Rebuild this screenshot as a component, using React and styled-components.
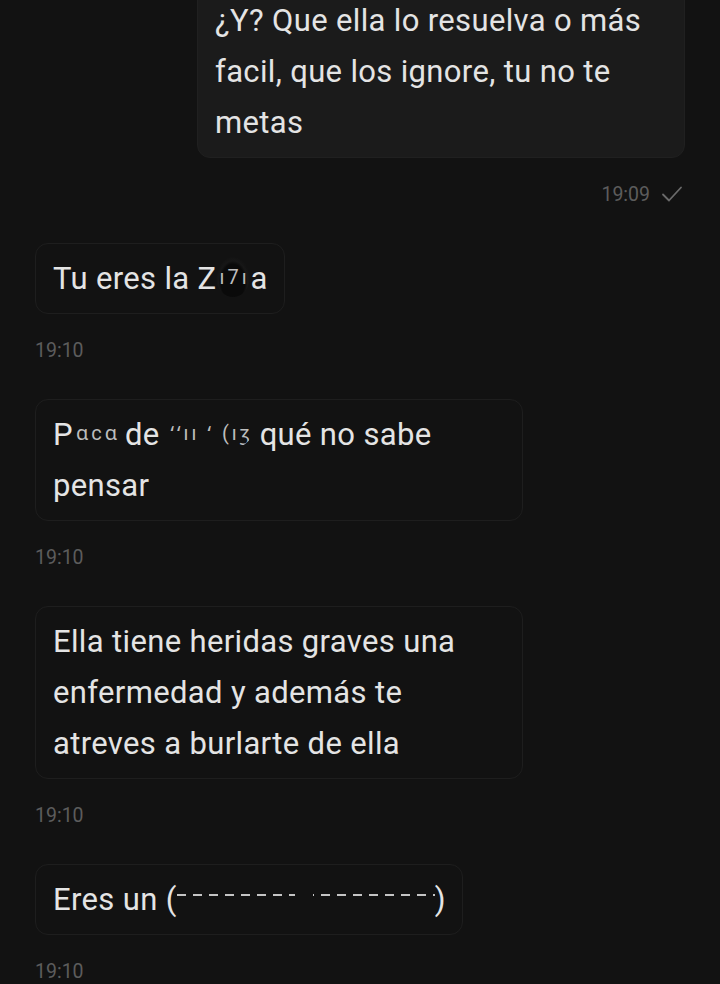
import styled, { createGlobalStyle } from "styled-components";

const GlobalStyle = createGlobalStyle`
  html, body {
    margin: 0;
    padding: 0;
    background: #121212;
  }
  body {
    font-family: Roboto, "Noto Sans", "Liberation Sans", sans-serif;
    overflow: hidden;
  }
`;

const Chat = styled.div`
  display: flex;
  flex-direction: column;
  gap: 37px;
  padding: 0 35px;
  margin-top: -15px;
  height: 1000px;
`;

const Group = styled.div`
  display: flex;
  flex-direction: column;
  align-items: ${(p) => (p.$out ? "flex-end" : "flex-start")};
  gap: 24px;
`;

const Bubble = styled.div`
  box-sizing: border-box;
  max-width: 488px;
  padding: 9px 16px 9px 17px;
  border-radius: 13px;
  background: ${(p) => (p.$out ? "#1b1b1b" : "#121212")};
  border: 1px solid ${(p) => (p.$out ? "#202020" : "#1e1e1e")};
  color: #e4e4e4;
  font-size: 31px;
  letter-spacing: 0.35px;
  line-height: 51px;
`;

const Smudge = styled.span`
  display: inline-block;
  width: ${(p) => p.$w}px;
  height: 40px;
  font-size: 20px;
  line-height: 40px;
  letter-spacing: 3px;
  text-indent: 3px;
  color: #bdbdbd;
  overflow: hidden;
  white-space: nowrap;
  vertical-align: -8px;
  border-radius: 50%;
  background: ${(p) =>
    p.$blob
      ? "radial-gradient(ellipse at 50% 62%, #0a0a0a 0 50%, #171717 60%, transparent 72%)"
      : "transparent"};
`;

const Erased = styled.span`
  display: inline-block;
  width: 258px;
  height: 16px;
  vertical-align: baseline;
  background:
    linear-gradient(90deg, transparent 0 118px, #121212 118px 136px, transparent 136px) top / 100% 2px no-repeat,
    repeating-linear-gradient(90deg, #c4c4c4 0 9px, transparent 9px 16px) top / 100% 2px no-repeat;
`;

const Meta = styled.div`
  display: flex;
  align-items: center;
  gap: 11px;
  height: 24px;
  padding-right: ${(p) => (p.$out ? "2px" : "0")};
`;

const Time = styled.span`
  font-size: 19.5px;
  color: #5c5c5c;
`;

const CheckIcon = () => (
  <svg width="22" height="18" viewBox="0 0 22 18" fill="none">
    <path d="M2 9.5 L8 15.5 L20 2.5" stroke="#6a6a6a" strokeWidth="1.8" strokeLinecap="round" strokeLinejoin="round" />
  </svg>
);

const getMessages = () => [
  {
    id: 1,
    out: true,
    time: "19:09",
    body: "¿Y? Que ella lo resuelva o más facil, que los ignore, tu no te metas",
  },
  {
    id: 2,
    time: "19:10",
    body: (
      <>
        Tu eres la Z<Smudge $w={34} $blob>ı7ı</Smudge>a
      </>
    ),
  },
  {
    id: 3,
    time: "19:10",
    body: (
      <>
        P<Smudge $w={52}>ɑcɑ</Smudge>de <Smudge $w={84}>ʻʻıı ʻ (ıʒ</Smudge> qué no sabe pensar
      </>
    ),
  },
  {
    id: 4,
    time: "19:10",
    body: "Ella tiene heridas graves una enfermedad y además te atreves a burlarte de ella",
  },
  {
    id: 5,
    time: "19:10",
    body: (
      <>
        Eres un (<Erased />)
      </>
    ),
  },
];

const App = () => {
  const messages = getMessages();
  return (
    <>
      <GlobalStyle />
      <Chat>
        {messages.map((m) => (
          <Group key={m.id} $out={m.out}>
            <Bubble $out={m.out}>{m.body}</Bubble>
            <Meta $out={m.out}>
              <Time>{m.time}</Time>
              {m.out && <CheckIcon />}
            </Meta>
          </Group>
        ))}
      </Chat>
    </>
  );
};
export default App;
